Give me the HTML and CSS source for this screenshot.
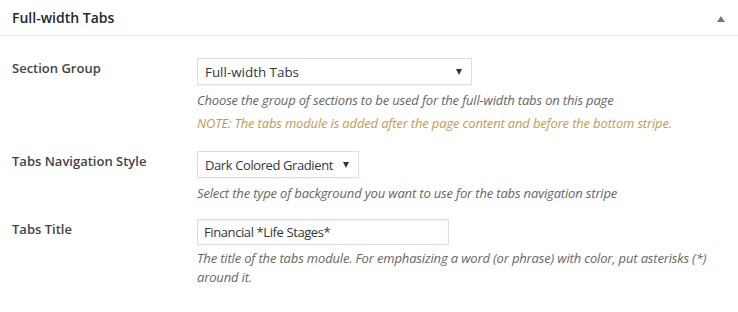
FILE: index.html
```html
<!DOCTYPE html>
<html lang="en">
  <head>
    <meta charset="UTF-8" />
    <meta name="viewport" content="width=device-width, initial-scale=1.0" />
    <title>Full-width Tabs</title>
    <link rel="stylesheet" href="styles.css">
  </head>
  <body>
    <div class="postbox">
      <!-- Box header -->
      <div class="box-head">
        <h2>Full-width Tabs</h2>
        <span class="toggle"></span>
      </div>

      <!-- Settings rows -->
      <div class="box-body">
        <div class="row first">
          <div class="label">Section Group</div>
          <div class="field">
            <div class="select wide">
              <span>Full-width Tabs</span>
              <i class="arrow"></i>
            </div>
            <p class="desc">Choose the group of sections to be used for the full-width tabs on this page</p>
            <p class="desc note">NOTE: The tabs module is added after the page content and before the bottom stripe.</p>
          </div>
        </div>

        <div class="row">
          <div class="label">Tabs Navigation Style</div>
          <div class="field">
            <div class="select narrow">
              <span>Dark Colored Gradient</span>
              <i class="arrow"></i>
            </div>
            <p class="desc">Select the type of background you want to use for the tabs navigation stripe</p>
          </div>
        </div>

        <div class="row">
          <div class="label">Tabs Title</div>
          <div class="field">
            <input class="text" type="text" value="Financial *Life Stages*">
            <p class="desc tight">The title of the tabs module. For emphasizing a word (or phrase) with color, put asterisks (*)<br>around it.</p>
          </div>
        </div>
      </div>
    </div>
  </body>
</html>
```

FILE: styles.css
```css
* {
  margin: 0;
  padding: 0;
  box-sizing: border-box;
}
body {
  background: #fff;
  font-family: "Open Sans", sans-serif;
  color: #444;
  width: 738px;
}

.postbox {
  background: #fff;
}

.box-head {
  display: flex;
  align-items: center;
  justify-content: space-between;
  height: 36px;
  padding: 0 13px 0 12px;
  border-bottom: 1px solid #eee;
}

.box-head h2 {
  font-size: 14px;
  font-weight: 600;
  color: #23282d;
}

.toggle {
  width: 0;
  height: 0;
  border-left: 4px solid transparent;
  border-right: 4px solid transparent;
  border-bottom: 6px solid #72777c;
  margin-top: 2px;
}

.box-body {
  padding: 22px 0 0 12px;
}

.row {
  display: grid;
  grid-template-columns: 185px 1fr;
  margin-bottom: 16px;
}

.row.first {
  margin-bottom: 18px;
}

.label {
  font-size: 13px;
  font-weight: 600;
  line-height: 20px;
  color: #444;
}

.select {
  display: flex;
  align-items: center;
  justify-content: space-between;
  height: 27px;
  padding: 0 7px;
  border: 1px solid #ddd;
  box-shadow: 0 1px 1px rgba(0, 0, 0, 0.04);
  font-size: 13.4px;
  white-space: nowrap;
  color: #32373c;
}

.select.wide {
  width: 275px;
}

.select.narrow {
  width: 162px;
  font-size: 13px;
  letter-spacing: -0.4px;
}

.arrow {
  width: 0;
  height: 0;
  border-left: 3.5px solid transparent;
  border-right: 3.5px solid transparent;
  border-top: 6px solid #32373c;
  margin-right: 2px;
}

.text {
  display: block;
  width: 252px;
  height: 26px;
  padding: 0 6px;
  border: 1px solid #ddd;
  box-shadow: inset 0 1px 2px rgba(0, 0, 0, 0.07);
  font-family: inherit;
  font-size: 13px;
  letter-spacing: -0.4px;
  color: #32373c;
  outline: none;
}

.desc {
  margin-top: 6px;
  font-size: 13px;
  font-style: italic;
  letter-spacing: -0.16px;
  line-height: 19px;
  color: #666;
}

.desc.note {
  margin-top: 4px;
  color: #c49a50;
}

.desc.tight {
  margin-top: 4px;
}
```
